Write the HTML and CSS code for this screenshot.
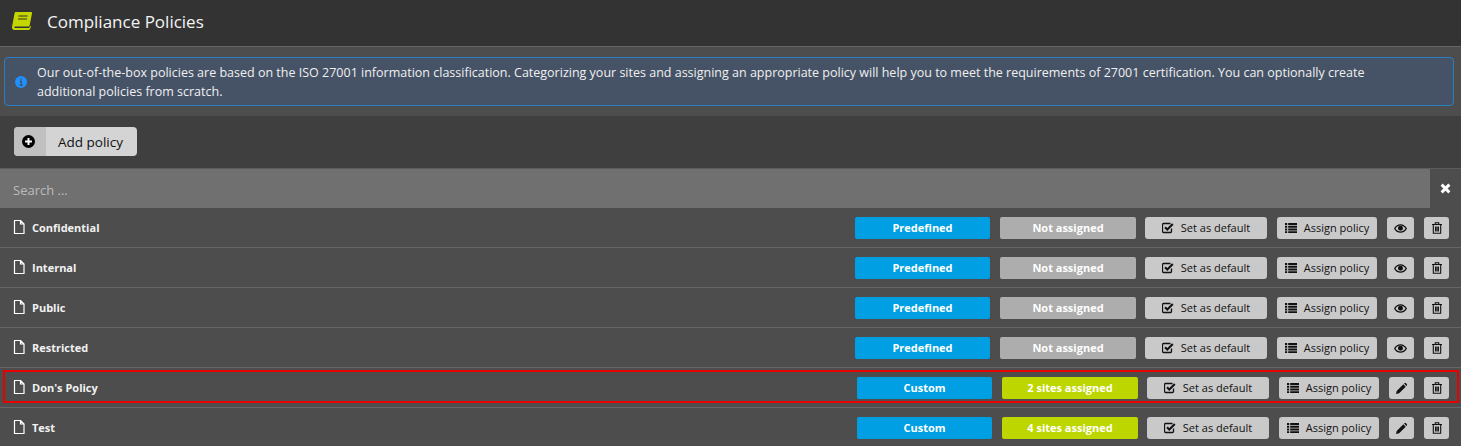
FILE: index.html
```html
<!DOCTYPE html>
<html lang="en">
<head>
<meta charset="utf-8">
<title>Compliance Policies</title>
<link rel="stylesheet" href="styles.css">
</head>
<body>
<svg class="defs" width="0" height="0" aria-hidden="true">
  <defs>
    <symbol id="i-file" viewBox="0 0 12 14"><path d="M1.500.5h6L11 4v9.500H1.500zM7.500.5V4H11" fill="none" stroke="currentColor" stroke-width="1.200"/></symbol>
    <symbol id="i-check" viewBox="0 0 12 12"><path d="M9.500 6.500v3a1 1 0 0 1-1 1h-7a1 1 0 0 1-1-1v-7a1 1 0 0 1 1-1h7" fill="none" stroke="currentColor" stroke-width="1.300"/><path d="M3 5.200 5.300 7.500 10.800 2" fill="none" stroke="currentColor" stroke-width="2"/></symbol>
    <symbol id="i-list" viewBox="0 0 12 10"><path d="M0 0h2.200v2H0zM3.200 0H12v2H3.200zM0 2.800h2.200v2H0zM3.200 2.800H12v2H3.200zM0 5.600h2.200v2H0zM3.200 5.600H12v2H3.200zM0 8.200h2.200V10H0zM3.200 8.200H12V10H3.200z" fill="currentColor"/></symbol>
    <symbol id="i-eye" viewBox="0 0 12 8"><path fill-rule="evenodd" d="M6 0c2.600 0 4.800 1.600 6 4-1.200 2.400-3.400 4-6 4S1.200 6.400 0 4C1.200 1.600 3.400 0 6 0zM6 1.200C4.200 1.200 2.500 2.200 1.300 4 2.500 5.800 4.200 6.800 6 6.800S9.500 5.800 10.700 4C9.500 2.200 7.800 1.200 6 1.200z" fill="currentColor"/><circle cx="6" cy="3.800" r="2.300" fill="currentColor"/></symbol>
    <symbol id="i-trash" viewBox="0 0 10 12"><path d="M0 2.500h10M3.300 2.500V.7h3.400v1.800M1.300 2.500v8.800h7.400V2.500M3.600 4.500v5M5 4.500v5M6.400 4.500v5" fill="none" stroke="currentColor" stroke-width="1.100"/></symbol>
    <symbol id="i-pencil" viewBox="0 0 12 12"><path d="M0 12l.8-3.400L8 1.400l2.600 2.600-7.200 7.200zM8.800.6 9.400 0a1 1 0 0 1 1.300 0l1.300 1.300a1 1 0 0 1 0 1.300l-.6.600z" fill="currentColor"/></symbol>
  </defs>
</svg>

<header class="page-header">
  <svg class="book" viewBox="0 0 20 18" aria-hidden="true">
    <path d="M4 0h15a1 1 0 0 1 1 1.200l-2.300 12a1.500 1.500 0 0 1-1.500 1.300H3.500c-1 0-1.300.6-1.200 1 .1.300.4.500 1 .500h13.200c.6 0 1-.3 1.200-.8l.3-1.300 1 .3-.7 2.300c-.2.900-1 1.500-2 1.500H2.500C1 18 0 17 0 15.500c0-.300 0-.6.100-.9L2.500 1.400C2.700.5 3.200 0 4 0z" fill="#c4d600"/>
    <path d="M6.500 4h9M6 7h9" stroke="#333" stroke-width="1.200"/>
  </svg>
  <h1 class="page-title">Compliance Policies</h1>
</header>

<section class="notice-band">
  <div class="notice">
    <svg class="notice-icon" viewBox="0 0 12 12" aria-hidden="true">
      <circle cx="6" cy="6" r="6" fill="#1e90ff"/>
      <path d="M6 2.200v1.500M4.800 5.200H6.300v3.800M4.700 9.200h3" stroke="#46546a" stroke-width="1.400" fill="none"/>
    </svg>
    <p class="notice-text">Our out-of-the-box policies are based on the ISO 27001 information classification. Categorizing your sites and assigning an appropriate policy will help you to meet the requirements of 27001 certification. You can optionally create additional policies from scratch.</p>
  </div>
</section>

<section class="toolbar">
  <button class="add-btn" type="button">
    <span class="add-icon">
      <svg viewBox="0 0 12 12" aria-hidden="true"><circle cx="6" cy="6" r="6" fill="#000"/><path d="M6 2.800v6.400M2.800 6h6.400" stroke="#fff" stroke-width="1.800"/></svg>
    </span>
    <span class="add-label">Add policy</span>
  </button>
</section>

<div class="search">
  <div class="search-field">Search ...</div>
  <button class="search-clear" type="button">
    <svg viewBox="0 0 10 10" aria-hidden="true"><path d="M1.500 1.500l7 7M8.500 1.500l-7 7" stroke="#fff" stroke-width="2.700"/></svg>
  </button>
</div>

<main class="rows">
  <div class="row">
    <svg class="file"><use href="#i-file"/></svg><span class="name">Confidential</span>
    <div class="actions">
      <span class="badge blue">Predefined</span><span class="badge grey">Not assigned</span>
      <button class="btn default-btn" type="button"><svg class="ic-check"><use href="#i-check"/></svg>Set as default</button>
      <button class="btn assign-btn" type="button"><svg class="ic-list"><use href="#i-list"/></svg>Assign policy</button>
      <button class="btn icon-btn eye-btn" type="button"><svg class="ic-eye"><use href="#i-eye"/></svg></button>
      <button class="btn icon-btn" type="button"><svg class="ic-trash"><use href="#i-trash"/></svg></button>
    </div>
  </div>
  <div class="row">
    <svg class="file"><use href="#i-file"/></svg><span class="name">Internal</span>
    <div class="actions">
      <span class="badge blue">Predefined</span><span class="badge grey">Not assigned</span>
      <button class="btn default-btn" type="button"><svg class="ic-check"><use href="#i-check"/></svg>Set as default</button>
      <button class="btn assign-btn" type="button"><svg class="ic-list"><use href="#i-list"/></svg>Assign policy</button>
      <button class="btn icon-btn eye-btn" type="button"><svg class="ic-eye"><use href="#i-eye"/></svg></button>
      <button class="btn icon-btn" type="button"><svg class="ic-trash"><use href="#i-trash"/></svg></button>
    </div>
  </div>
  <div class="row">
    <svg class="file"><use href="#i-file"/></svg><span class="name">Public</span>
    <div class="actions">
      <span class="badge blue">Predefined</span><span class="badge grey">Not assigned</span>
      <button class="btn default-btn" type="button"><svg class="ic-check"><use href="#i-check"/></svg>Set as default</button>
      <button class="btn assign-btn" type="button"><svg class="ic-list"><use href="#i-list"/></svg>Assign policy</button>
      <button class="btn icon-btn eye-btn" type="button"><svg class="ic-eye"><use href="#i-eye"/></svg></button>
      <button class="btn icon-btn" type="button"><svg class="ic-trash"><use href="#i-trash"/></svg></button>
    </div>
  </div>
  <div class="row">
    <svg class="file"><use href="#i-file"/></svg><span class="name">Restricted</span>
    <div class="actions">
      <span class="badge blue">Predefined</span><span class="badge grey">Not assigned</span>
      <button class="btn default-btn" type="button"><svg class="ic-check"><use href="#i-check"/></svg>Set as default</button>
      <button class="btn assign-btn" type="button"><svg class="ic-list"><use href="#i-list"/></svg>Assign policy</button>
      <button class="btn icon-btn eye-btn" type="button"><svg class="ic-eye"><use href="#i-eye"/></svg></button>
      <button class="btn icon-btn" type="button"><svg class="ic-trash"><use href="#i-trash"/></svg></button>
    </div>
  </div>
  <div class="row row-marked">
    <svg class="file"><use href="#i-file"/></svg><span class="name">Don's Policy</span>
    <div class="actions">
      <span class="badge blue">Custom</span><span class="badge lime">2 sites assigned</span>
      <button class="btn default-btn" type="button"><svg class="ic-check"><use href="#i-check"/></svg>Set as default</button>
      <button class="btn assign-btn" type="button"><svg class="ic-list"><use href="#i-list"/></svg>Assign policy</button>
      <button class="btn icon-btn" type="button"><svg class="ic-pencil"><use href="#i-pencil"/></svg></button>
      <button class="btn icon-btn" type="button"><svg class="ic-trash"><use href="#i-trash"/></svg></button>
    </div>
  </div>
  <div class="row">
    <svg class="file"><use href="#i-file"/></svg><span class="name">Test</span>
    <div class="actions">
      <span class="badge blue">Custom</span><span class="badge lime">4 sites assigned</span>
      <button class="btn default-btn" type="button"><svg class="ic-check"><use href="#i-check"/></svg>Set as default</button>
      <button class="btn assign-btn" type="button"><svg class="ic-list"><use href="#i-list"/></svg>Assign policy</button>
      <button class="btn icon-btn" type="button"><svg class="ic-pencil"><use href="#i-pencil"/></svg></button>
      <button class="btn icon-btn" type="button"><svg class="ic-trash"><use href="#i-trash"/></svg></button>
    </div>
  </div>
</main>
</body>
</html>
```
FILE: styles.css
```css
*, *::after { box-sizing: border-box; }
html, body { height: 100%; }
body {
  margin: 0;
  height: 446px;
  overflow: hidden;
  background: #4d4d4d;
  font-family: "Open Sans", "Noto Sans", sans-serif;
  color: #fff;
}
button { font-family: inherit; border: 0; padding: 0; cursor: pointer; }
.defs { position: absolute; }

.page-header {
  height: 47px;
  display: flex;
  align-items: center;
  padding: 0 0 3px 12px;
  background: #333;
  border-bottom: 1px solid #666;
}
.book { width: 20px; height: 18px; margin-right: 15px; margin-top: -2px; }
.page-title { margin: 0; font-size: 17px; font-weight: 400; color: #f4f4f4; }

.notice-band { height: 69px; padding: 10px 7px 10px 4px; background: #4d4d4d; }
.notice {
  height: 49px;
  display: flex;
  align-items: center;
  background: #465367;
  border: 1px solid #2a7ec0;
  border-radius: 4px;
  padding: 0 70px 0 10px;
}
.notice-icon { width: 12px; height: 12px; flex: none; margin-right: 10px; }
.notice-text { margin: 0; font-size: 12.5px; line-height: 19px; color: #f0f0f0; }

.toolbar { height: 52px; padding: 11px 14px 0; background: #3f3f3f; }
.add-btn {
  display: flex;
  width: 123px;
  height: 29px;
  border-radius: 4px;
  overflow: hidden;
  background: #d4d4d4;
  color: #111;
}
.add-icon { width: 32px; height: 100%; display: flex; align-items: center; justify-content: center; background: #c0c0c0; }
.add-icon svg { width: 13px; height: 13px; margin-right: 3px; }
.add-label { flex: 1; font-size: 13.5px; line-height: 31px; text-align: left; padding-left: 12px; }

.search { height: 40px; display: flex; border-top: 1px solid #5c5c5c; background: #707070; }
.search-field { flex: 1; padding-left: 13px; font-size: 13px; line-height: 42px; color: #bbb; }
.search-clear { width: 31px; display: flex; align-items: center; justify-content: center; background: #4d4d4d; }
.search-clear svg { width: 11px; height: 11px; }

.row {
  position: relative;
  height: 40px;
  display: flex;
  align-items: center;
  padding: 0 12px 0 13px;
  border-bottom: 1px solid #666;
}
.row-marked::after {
  content: "";
  position: absolute;
  left: 3px;
  right: 2px;
  top: 2px;
  height: 33px;
  border: 2px solid #e60000;
  pointer-events: none;
}
.file { width: 12px; height: 14px; margin: 0 7px 1px 0; color: #fff; }
.name { font-size: 11px; font-weight: 700; color: #f2f2f2; }
.actions { margin: 1px 0 0 auto; display: flex; align-items: center; gap: 10px; }
.badge {
  width: 135px;
  height: 22px;
  border-radius: 2px;
  font-size: 11px;
  font-weight: 700;
  line-height: 22px;
  text-align: center;
  color: #fff;
}
.blue { background: #009fe3; }
.grey { background: #adadad; }
.lime { background: #bed600; }
.badge + .badge { width: 136px; margin-right: -1px; }
.btn {
  height: 22px;
  display: flex;
  align-items: center;
  justify-content: center;
  background: #c9c9c9;
  border-radius: 3px;
  font-size: 11px;
  color: #111;
}
.default-btn { width: 122px; padding-bottom: 2px; }
.assign-btn { width: 100px; padding-bottom: 2px; }
.icon-btn { width: 25px; }
.eye-btn { width: 27px; }
.ic-check { width: 12px; height: 12px; margin: 2px 7px 0 0; }
.ic-list { width: 12px; height: 10px; margin: 2px 7px 0 0; }
.ic-eye { width: 13px; height: 9px; }
.ic-trash { width: 10px; height: 12px; }
.ic-pencil { width: 11px; height: 11px; }
```
